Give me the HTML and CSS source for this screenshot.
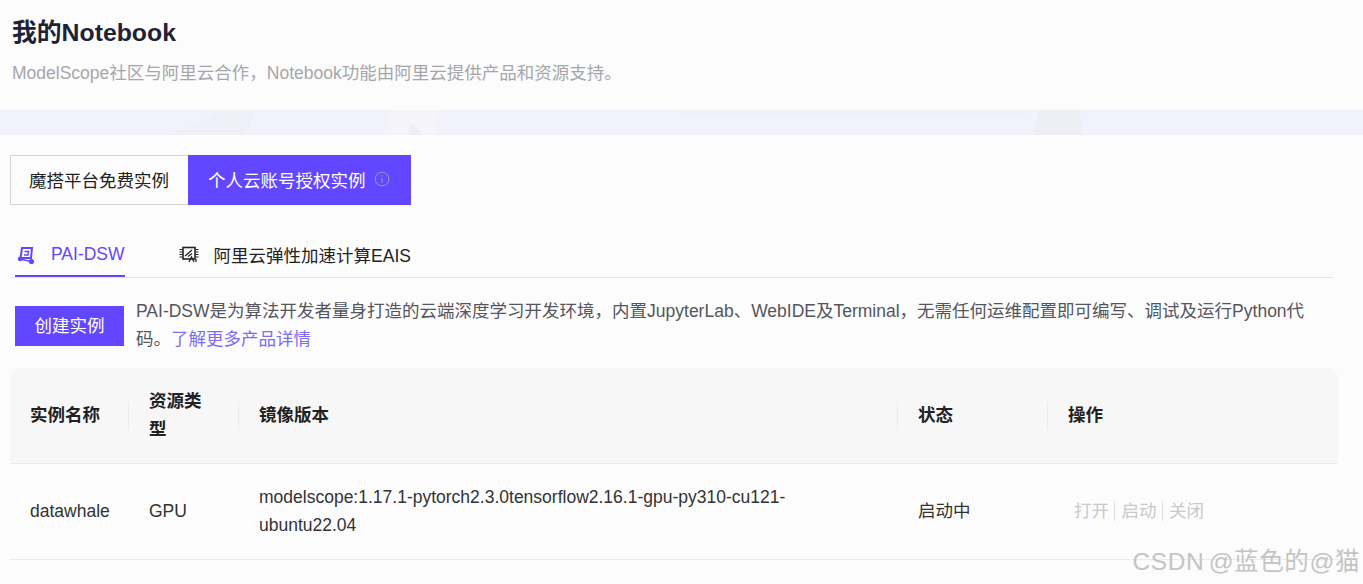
FILE: index.html
```html
<!DOCTYPE html>
<html lang="zh-CN">
<head>
    <meta charset="UTF-8">
    <title>我的Notebook</title>
    <link rel="stylesheet" href="styles.css">
</head>
<body>
    <div class="header">
        <h1>我的Notebook</h1>
        <p>ModelScope社区与阿里云合作，Notebook功能由阿里云提供产品和资源支持。</p>
    </div>
    <div class="band">
        <svg viewBox="0 0 1363 25" preserveAspectRatio="none">
            <path d="M170 25L205 10L218 0H257L245 25Z" fill="#efeff7"/>
            <path d="M383 25L392 0H438L436 25Z" fill="#f4f4fa"/>
            <path d="M408 25L411 12L424 25Z" fill="#eeeef6"/>
            <path d="M680 0H1030V8H680Z" fill="#eeeef7" opacity="0.6"/>
            <path d="M1033 25L1038 0H1080L1082 25Z" fill="#eeeef5"/>
        </svg>
    </div>
    <div class="content">
        <div class="switch">
            <div class="switch-item">魔搭平台免费实例</div>
            <div class="switch-item active">个人云账号授权实例
                <svg class="info" viewBox="0 0 16 16" width="16" height="16">
                    <circle cx="8" cy="8" r="6.8" fill="none" stroke="#a09cb0" stroke-width="1"/>
                    <path d="M8 4.2v1.2M8 7v4.8" stroke="#a09cb0" stroke-width="1" fill="none"/>
                </svg>
            </div>
        </div>

        <div class="tabs">
            <div class="tab active">
                <svg viewBox="0 0 18 18" width="18" height="18">
                    <path d="M5 2H15L14 12H3.5Z" fill="none" stroke="#6346ff" stroke-width="2"/>
                    <path d="M7.5 5.5H11.5L11 9H7" fill="none" stroke="#6346ff" stroke-width="1.4"/>
                    <path d="M3 13L14 15.5" stroke="#6346ff" stroke-width="1.6"/>
                    <circle cx="3" cy="13" r="2.2" fill="#6346ff"/>
                    <circle cx="14.5" cy="15.5" r="2.6" fill="#6346ff"/>
                </svg>
                PAI-DSW
            </div>
            <div class="tab">
                <svg viewBox="0 0 20 18" width="20" height="18">
                    <rect x="4" y="2.5" width="12" height="11.5" fill="none" stroke="#222" stroke-width="1.6"/>
                    <path d="M0.5 4.500h3M0.500 7h3M0.500 9.500h3M0.500 12h3M16.500 4.500h3M16.500 7h3M16.500 9.500h3M16.500 12h3" stroke="#222" stroke-width="1.2"/>
                    <path d="M6 11L13 5M9 11.500l4-3" stroke="#222" stroke-width="1.300"/>
                    <path d="M10 17l2.500-5 2.500 5M17 14v3" fill="none" stroke="#222" stroke-width="1.300"/>
                </svg>
                阿里云弹性加速计算EAIS
            </div>
        </div>

        <div class="intro">
            <button class="create-btn">创建实例</button>
            <p>PAI-DSW是为算法开发者量身打造的云端深度学习开发环境，内置JupyterLab、WebIDE及Terminal，无需任何运维配置即可编写、调试及运行Python代码。<a href="#">了解更多产品详情</a></p>
        </div>

        <table class="list">
            <colgroup>
                <col class="col-name">
                <col class="col-type">
                <col class="col-image">
                <col class="col-status">
                <col class="col-action">
            </colgroup>
            <thead>
                <tr>
                    <th>实例名称</th>
                    <th>资源类型</th>
                    <th>镜像版本</th>
                    <th>状态</th>
                    <th>操作</th>
                </tr>
            </thead>
            <tbody>
                <tr>
                    <td>datawhale</td>
                    <td>GPU</td>
                    <td>modelscope:1.17.1-pytorch2.3.0tensorflow2.16.1-gpu-py310-cu121-ubuntu22.04</td>
                    <td>启动中</td>
                    <td class="actions"><span>打开</span><span>启动</span><span>关闭</span></td>
                </tr>
            </tbody>
        </table>
    </div>
    <div class="watermark">CSDN @蓝色的@猫</div>
</body>
</html>
```

FILE: styles.css
```css
html, body {
    height: 100%;
}
body {
    font-family: "Liberation Sans", "Noto Sans CJK SC", sans-serif;
    font-size: 17.5px;
    margin: 0;
    padding: 0;
    background-color: #fcfcfd;
    color: #222;
    overflow: hidden;
    position: relative;
}
.header {
    height: 110px;
    padding-left: 12px;
    box-sizing: border-box;
}
.header h1 {
    margin: 0;
    padding-top: 17px;
    font-size: 24.8px;
    line-height: 32px;
    color: #1f2233;
}
.header p {
    margin: 12px 0 0;
    line-height: 24px;
    color: #a6a6a9;
}
.band {
    height: 25px;
    background-color: #f2f2fc;
}
.band svg {
    display: block;
    width: 100%;
    height: 25px;
}
.content {
    padding: 20px 25px 0 10px;
}
.switch {
    display: flex;
    height: 50px;
}
.switch-item {
    display: flex;
    align-items: center;
    gap: 8px;
    padding: 0 19px 2px 18px;
    border: 1px solid #d5d5d5;
    border-right: none;
    box-sizing: border-box;
}
.switch-item.active {
    padding: 0 21.5px 2px 20px;
    background-color: #6346ff;
    border: none;
    color: #fff;
}
.tabs {
    display: flex;
    margin: 27px 5px 0 0;
    border-bottom: 1px solid #e5e5e8;
    height: 45px;
    padding-left: 5px;
}
.tab {
    display: flex;
    align-items: center;
    gap: 15px;
    height: 45px;
    box-sizing: border-box;
    margin-right: 54px;
    padding-bottom: 1px;
    color: #222;
}
.tab svg {
    flex: none;
}
.tab.active {
    color: #6346ff;
    border-bottom: 2px solid #6346ff;
    padding: 2px 0 0 2px;
    gap: 16px;
}
.intro {
    display: flex;
    gap: 12px;
    padding: 19px 30px 0 5px;
    height: 90px;
    box-sizing: border-box;
}
.intro p {
    margin: 0;
    line-height: 28px;
    color: #55555c;
}
.intro a {
    color: #7d6bf5;
    text-decoration: none;
}
.create-btn {
    flex: none;
    width: 109px;
    height: 40px;
    margin-top: 9px;
    padding: 0 0 3px;
    border: none;
    background-color: #6346ff;
    color: #fff;
    font-family: inherit;
    font-size: 17.5px;
}
.list {
    width: 1328px;
    border-collapse: separate;
    border-spacing: 0;
    table-layout: fixed;
    line-height: 28px;
}
.col-name { width: 119px; }
.col-type { width: 110px; }
.col-image { width: 659px; }
.col-status { width: 150px; }
.list th, .list td {
    height: 93px;
    padding: 0 20px 2px;
    text-align: left;
    border-bottom: 1px solid #ebebec;
}
.list th {
    background-color: #f7f7f8;
    font-weight: bold;
    position: relative;
}
.list th:nth-child(2) {
    padding-right: 22px;
}
.list th:first-child {
    border-top-left-radius: 12px;
}
.list th:last-child {
    border-top-right-radius: 12px;
}
.list th + th::before {
    content: "";
    position: absolute;
    left: -1px;
    top: 34px;
    height: 28px;
    border-left: 1px solid #ececed;
}
.list td {
    color: #333;
}
.list td.actions {
    padding-left: 26px;
    color: #c9c9c9;
}
.actions span + span {
    border-left: 1px solid #dedede;
    margin-left: 5px;
    padding-left: 6.5px;
}
.watermark {
    position: absolute;
    right: 3px;
    bottom: 7px;
    font-size: 24.5px;
    line-height: 30px;
    color: #c4c4c4;
    letter-spacing: 0.6px;
    word-spacing: -3px;
}
```
